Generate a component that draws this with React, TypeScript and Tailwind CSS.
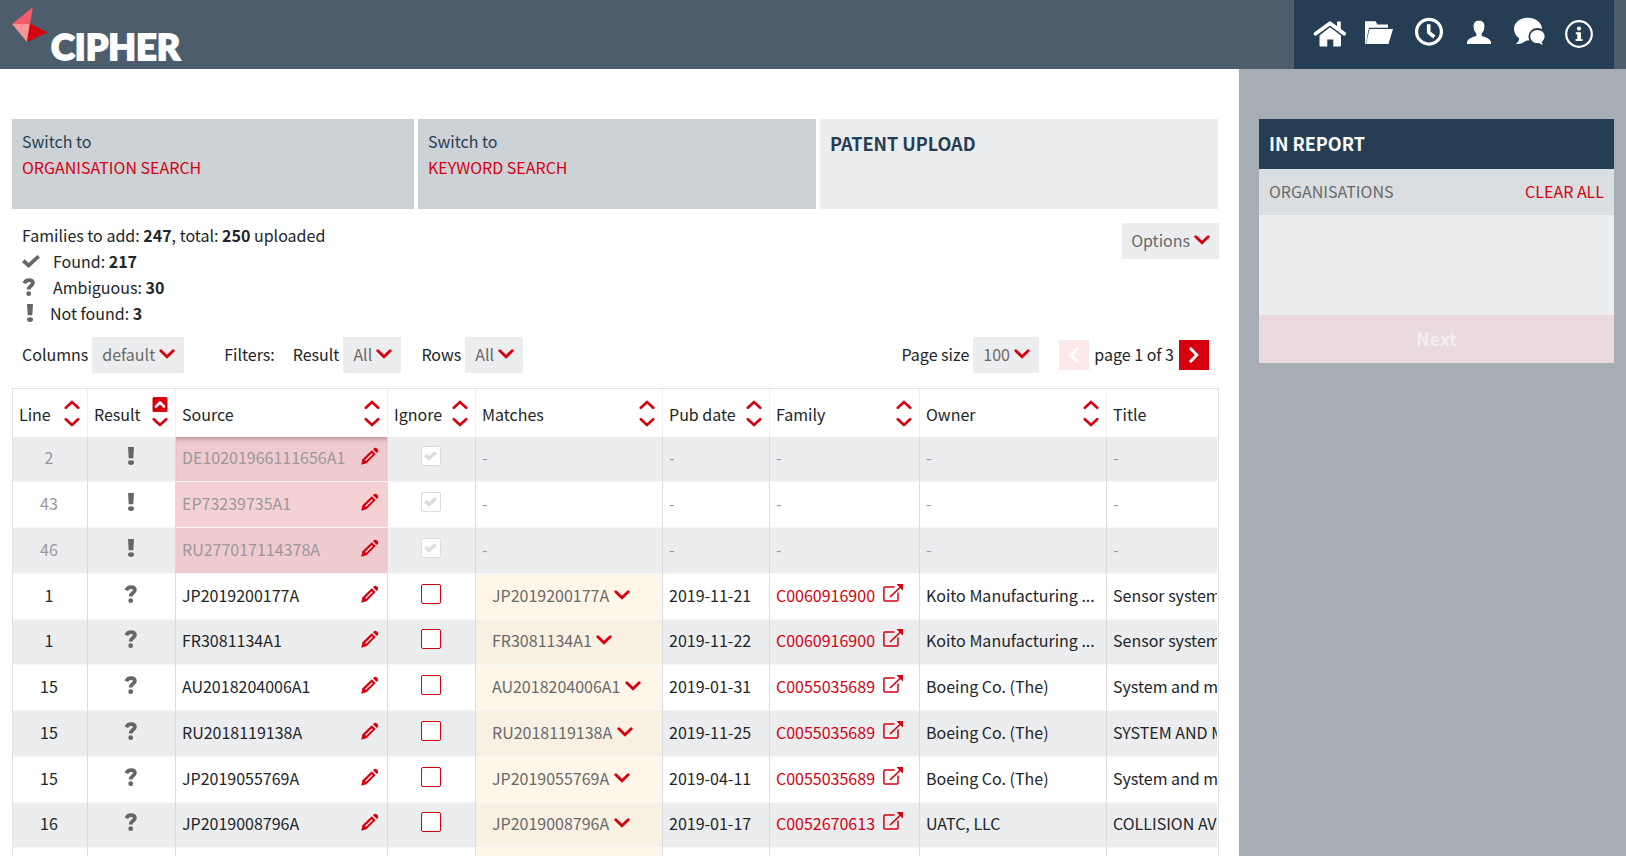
import type { ReactNode } from "react";

const NAVY_TEXT = "text-[#253e53]";

function Chevron({ className = "" }: { className?: string }) {
  return (
    <svg viewBox="0 0 16 10" className={`h-[10px] w-4 fill-none stroke-current ${className}`} aria-hidden="true">
      <path d="M1.8 1.8 8 7.8l6.200-6" strokeWidth="2.900" strokeLinecap="round" />
    </svg>
  );
}

function SortButton({ label, active = false }: { label: string; active?: boolean }) {
  return (
    <button type="button" aria-label={`Sort by ${label}`} className="shrink-0 text-[#d6000f]">
      <svg viewBox="0 0 16 30" className="h-[30px] w-4 fill-none stroke-current">
        {active && <rect x="0.500" y="0" width="15" height="15" rx="1.500" className="fill-[#d6000f] stroke-none" />}
        {active ? (
          <path d="M4 9.500 8 5.500l4 4" stroke="#fff" strokeWidth="2.600" strokeLinecap="round" />
        ) : (
          <path d="M1.800 10.800 8 5l6.200 5.800" strokeWidth="2.600" strokeLinecap="round" />
        )}
        <path d="M1.800 22.200 8 28l6.200-5.800" strokeWidth="2.600" strokeLinecap="round" />
      </svg>
    </button>
  );
}

function Drop({ id, value, label, plain = false }: { id?: string; value: string; label?: string; plain?: boolean }) {
  return (
    <span className={`relative inline-flex items-center ${plain ? "" : "h-9 bg-[#ecedef] pb-0.5"}`}>
      <select
        id={id}
        aria-label={label}
        defaultValue={value}
        className="appearance-none bg-transparent pr-[29px] pl-[10px] leading-[26px] text-[#696969]"
      >
        <option>{value}</option>
      </select>
      <Chevron className="pointer-events-none absolute right-[9px] text-[#d6000f]" />
    </span>
  );
}

const Tick = ({ className }: { className: string }) => (
  <svg viewBox="0 0 18 13" className={`overflow-visible ${className}`} aria-hidden="true">
    <path d="M0 7.200 2.700 4.300 6.600 8 15.300 0 18 2.400 6.700 13Z" fill="currentColor" />
  </svg>
);

const Question = () => (
  <svg viewBox="0 0 12 18" className="h-[18px] w-3 overflow-visible text-[#666]" aria-label="Ambiguous">
    <path d="M1.300 5.200C2.400 2.600 4 2.100 6 2.100c2.400 0 3.900 1.100 3.900 3C9.900 7.900 5.700 7.700 5.700 11.500" fill="none" stroke="currentColor" strokeWidth="3.800" />
    <circle cx="5.700" cy="15.700" r="2.400" fill="currentColor" />
  </svg>
);

const Bang = () => (
  <svg viewBox="0 0 8 18" className="h-[18px] w-2 text-[#666]" aria-label="Not found">
    <path d="M1 0h6L6.300 11.300H1.700Z" fill="currentColor" />
    <ellipse cx="4" cy="15.600" rx="3" ry="2.400" fill="currentColor" />
  </svg>
);

const Pencil = () => (
  <svg viewBox="0 0 18 18" className="size-[18px] fill-none stroke-current" aria-hidden="true">
    <path d="M0.200 17.800 1.500 12.200 10.800 3.200 14.700 7.100 5.500 16.200Z" fill="currentColor" stroke="none" />
    <path d="M12 2.200 13.300 1a3 3 0 0 1 3.800 3.600L15.800 6Z" fill="currentColor" stroke="none" />
    <path d="M4.600 13.400 11.300 6.800" stroke="#fff" strokeWidth="1.300" />
  </svg>
);

const External = () => (
  <svg viewBox="0 0 20 18" className="h-[18px] w-5 fill-none stroke-current" aria-hidden="true">
    <path d="M11.500 2.900H1.900a1 1 0 0 0-1 1V16.100a1 1 0 0 0 1 1H14a1 1 0 0 0 1-1V8.500" strokeWidth="1.500" />
    <path d="M7 13 18 2.500" strokeWidth="1.700" />
    <path d="M13.500 0H20V6.500L18 4.800 15.300 2Z" fill="currentColor" stroke="none" />
  </svg>
);

const navIcons: { label: string; icon: ReactNode }[] = [
  {
    label: "Home",
    icon: (
      <>
        <path d="M2.500 17.700 17 7.300 31.200 17.700" fill="none" stroke="currentColor" strokeWidth="3.800" strokeLinecap="round" strokeLinejoin="round" />
        <path d="M24 5.500h3.800v9L24 11.500Z" />
        <path d="M17 11.300 28 19.400V29.500q0 1-1 1H20.300V23.500H14.300V30.500H7.500q-1 0-1-1V19.400Z" />
      </>
    ),
  },
  {
    label: "Reports",
    icon: (
      <>
        <path d="M2 5.300H12.500L14.500 8.500H25V11.700H6L2.700 28H2Z" />
        <path d="M6.500 13H30L25.500 28H3Z" />
      </>
    ),
  },
  {
    label: "History",
    icon: (
      <g fill="none" stroke="currentColor" strokeWidth="3.200">
        <circle cx="16" cy="15.700" r="12.400" />
        <path d="M15.700 8.300V16.500L21.300 21" strokeWidth="3.600" />
      </g>
    ),
  },
  {
    label: "Account",
    icon: <path d="M16 4.700c3.700 0 5.400 2 5.400 5.600 0 3.200-1 5.600-2.700 7.200v2.500c4.600 1.300 8.700 2.900 9.300 6.200V28H4V26.200c.6-3.300 4.700-4.900 9.300-6.200V17.500c-1.700-1.600-2.700-4-2.700-7.200 0-3.600 1.700-5.600 5.400-5.600Z" />,
  },
  {
    label: "Chat",
    icon: (
      <>
        <path d="M15 1.700C22.700 1.700 29 6.600 29 13S22.700 24.500 15 24.500l-1.500-.1C10.500 27 6.500 28.500 2.800 28 5 26.500 6 24.600 6.200 22.300 3 20.200 1 16.800 1 13 1 6.600 7.300 1.700 15 1.700Z" />
        <path d="M24.500 13c4.600 0 8 3.300 8 7.600 0 2.300-1 4.300-2.700 5.700.2 1.300.9 2.500 2.400 3.400-2.200.3-4.600-.4-6.400-1.700-5.600.5-9.500-2.900-9.500-7.400 0-4.300 3.600-7.600 8.200-7.600Z" stroke="#253e53" strokeWidth="1.800" />
      </>
    ),
  },
  {
    label: "Information",
    icon: (
      <>
        <circle cx="16" cy="18" r="12.800" fill="none" stroke="currentColor" strokeWidth="2.200" />
        <circle cx="16" cy="12.600" r="2.100" />
        <path d="M12.800 16.300H18V23H19.500V25H12.600V23H14.300V18.200H12.800Z" />
      </>
    ),
  },
];

interface Row {
  line: string;
  source: string;
  found: boolean;
  pub?: string;
  family?: string;
  owner?: string;
  title?: string;
}

const rows: Row[] = [
  { line: "2", source: "DE10201966111656A1", found: false },
  { line: "43", source: "EP73239735A1", found: false },
  { line: "46", source: "RU277017114378A", found: false },
  { line: "1", source: "JP2019200177A", found: true, pub: "2019-11-21", family: "C0060916900", owner: "Koito Manufacturing ...", title: "Sensor system" },
  { line: "1", source: "FR3081134A1", found: true, pub: "2019-11-22", family: "C0060916900", owner: "Koito Manufacturing ...", title: "Sensor system" },
  { line: "15", source: "AU2018204006A1", found: true, pub: "2019-01-31", family: "C0055035689", owner: "Boeing Co. (The)", title: "System and method" },
  { line: "15", source: "RU2018119138A", found: true, pub: "2019-11-25", family: "C0055035689", owner: "Boeing Co. (The)", title: "SYSTEM AND METHOD" },
  { line: "15", source: "JP2019055769A", found: true, pub: "2019-04-11", family: "C0055035689", owner: "Boeing Co. (The)", title: "System and method" },
  { line: "16", source: "JP2019008796A", found: true, pub: "2019-01-17", family: "C0052670613", owner: "UATC, LLC", title: "COLLISION AVOIDANCE" },
];

const columns = [
  { name: "Line", width: "w-[75px]" },
  { name: "Result", width: "w-[88px]" },
  { name: "Source", width: "w-[212px]" },
  { name: "Ignore", width: "w-[88px]" },
  { name: "Matches", width: "w-[187px]" },
  { name: "Pub date", width: "w-[107px]" },
  { name: "Family", width: "w-[150px]" },
  { name: "Owner", width: "w-[187px]" },
  { name: "Title", width: "w-[250px]" },
];

const cell = "overflow-hidden border-r border-b border-r-[#d9dbde] border-b-[#f5f6f7] pt-0 pr-2 pb-1 pl-1.5 whitespace-nowrap";

function TableRow({ row, index }: { row: Row; index: number }) {
  const grey = index % 2 === 0;
  const sourceTint = row.found ? "" : grey ? "bg-[#efcbcf]" : "bg-[#f5d1d4]";
  const matchTint = !row.found ? "" : grey ? "bg-[#f9f0e4]" : "bg-[#fff5e8]";
  return (
    <tr className={`h-[46px] nth-[4n+1]:h-[45px] ${grey ? "bg-[#ecedef]" : "bg-white"} ${row.found ? "" : "text-[#999]"}`}>
      <td className={`${cell} text-center`}>{row.line}</td>
      <td className={cell}>
        <div className="flex justify-center pb-0.5">{row.found ? <Question /> : <Bang />}</div>
      </td>
      <td className={`${cell} ${sourceTint} ${index === 0 ? "shadow-[inset_0_5px_5px_-3px_rgba(60,0,0,0.3)]" : ""}`}>
        <div className="flex items-center justify-between">
          {row.source}
          <button type="button" aria-label={`Edit ${row.source}`} className="pb-0.5 text-[#d6000f]">
            <Pencil />
          </button>
        </div>
      </td>
      <td className={cell}>
        <div className="flex justify-center pb-0.5">
          <label className="relative grid size-5 place-items-center">
            <input
              type="checkbox"
              aria-label={`Ignore ${row.source}`}
              disabled={!row.found}
              defaultChecked={!row.found}
              className="size-5 appearance-none rounded-xs border border-[#d6000f] bg-white disabled:border-[#d9dde0]"
            />
            {!row.found && <Tick className="absolute h-2 w-[11px] stroke-current stroke-2 text-[#d9dde0]" />}
          </label>
        </div>
      </td>
      <td className={`${cell} ${matchTint}`}>
        {row.found ? <Drop value={row.source} label={`Match for ${row.source}`} plain /> : "-"}
      </td>
      <td className={cell}>{row.pub ?? "-"}</td>
      <td className={cell}>
        {row.family ? (
          <a href="#family" className="flex items-center gap-2 text-[#d6000f]">
            {row.family}
            <span className="pb-1">
              <External />
            </span>
          </a>
        ) : (
          "-"
        )}
      </td>
      <td className={cell}>{row.owner ?? "-"}</td>
      <td className={cell}>{row.title ?? "-"}</td>
    </tr>
  );
}

export default function App() {
  return (
    <div className="flex h-screen flex-col overflow-hidden bg-white font-['Noto_Sans_CJK_SC',sans-serif] text-[16px] leading-[26px] text-[#212529]">
      <header className="flex h-[69px] shrink-0 justify-between bg-[#4d5d6b] pr-3 pl-3">
        <a href="#home" aria-label="Cipher" className="pt-[6px]">
          <svg viewBox="0 0 180 60" className="h-[60px] w-[180px] overflow-visible">
            <path d="M21 1 0 18h18Z" fill="#f15c66" />
            <path d="M0 18h18l-3 18Z" fill="#f89494" />
            <path d="M18 17.500 35.500 26.500 15 36Z" fill="#d6000f" />
            <text x="39" y="54" fill="#fff" stroke="#fff" strokeWidth="1.800" fontSize="36" fontWeight="900" fontFamily="Lato, sans-serif">
              CIPHER
            </text>
          </svg>
        </a>
        <nav className="grid grid-cols-6 bg-[#253e53] px-[10px] pt-4">
          {navIcons.map(({ label, icon }) => (
            <a key={label} href="#nav" aria-label={label} className="flex w-[50px] justify-center text-white">
              <svg viewBox="0 0 32 32" className="size-8 overflow-visible fill-current">
                {icon}
              </svg>
            </a>
          ))}
        </nav>
      </header>

      <div className="flex min-h-0 flex-1">
        <main className="min-w-0 flex-1 pt-[50px] pr-5 pl-3">
          <div className="grid h-[90px] grid-cols-[402fr_398fr_398fr] gap-1 pr-px">
            <div className={`bg-[#cdd2d6] px-[10px] pt-[9px] ${NAVY_TEXT}`}>
              Switch to
              <a href="#organisation" className="block text-[#d6000f]">ORGANISATION SEARCH</a>
            </div>
            <div className={`bg-[#cdd2d6] px-[10px] pt-[9px] ${NAVY_TEXT}`}>
              Switch to
              <a href="#keyword" className="block text-[#d6000f]">KEYWORD SEARCH</a>
            </div>
            <h1 className={`bg-[#ecedef] px-[10px] pt-[9px] text-[18px] leading-[30px] font-bold ${NAVY_TEXT}`}>PATENT UPLOAD</h1>
          </div>

          <div className="flex items-start justify-between pt-[13px] pl-[10px]">
            <div>
              <p>
                Families to add: <b>247</b>, total: <b>250</b> uploaded
              </p>
              <p className="flex items-center">
                <span className="w-[31px] text-[#666]">
                  <Tick className="h-[13px] w-[18px]" />
                </span>
                <span>Found: <b>217</b></span>
              </p>
              <p className="flex items-center">
                <span className="w-[31px] pl-px"><Question /></span>
                <span>Ambiguous: <b>30</b></span>
              </p>
              <p className="flex items-center">
                <span className="w-7 pl-1"><Bang /></span>
                <span>Not found: <b>3</b></span>
              </p>
            </div>
            <button type="button" className="mt-px flex h-9 items-center gap-1 bg-[#ecedef] px-[9px] pb-0.5 text-[#696969]">
              Options
              <Chevron className="text-[#d6000f]" />
            </button>
          </div>

          <div className="flex items-center pt-[11px] pr-[10px] pl-[10px]">
            <label htmlFor="columns" className="pr-1 pb-0.5">Columns</label>
            <Drop id="columns" value="default" />
            <span className="pb-0.5 pl-10">Filters:</span>
            <label htmlFor="result" className="pr-1 pb-0.5 pl-[18px]">Result</label>
            <Drop id="result" value="All" />
            <label htmlFor="rows" className="pr-1 pb-0.5 pl-5">Rows</label>
            <Drop id="rows" value="All" />
            <label htmlFor="size" className="ml-auto pr-1 pb-0.5">Page size</label>
            <Drop id="size" value="100" />
            <button type="button" disabled aria-label="Previous page" className="ml-5 grid size-[30px] place-items-center bg-[#fbe8e9] text-white">
              <Chevron className="rotate-90" />
            </button>
            <span className="px-[5px] pb-0.5">page 1 of 3</span>
            <button type="button" aria-label="Next page" className="grid size-[30px] place-items-center bg-[#d6000f] text-white">
              <Chevron className="-rotate-90" />
            </button>
          </div>

          <div className="mt-[15px] overflow-hidden border border-b-0 border-[#e1e3e5] pr-px">
            <div className="overflow-hidden">
              <table className="w-[1344px] table-fixed border-separate border-spacing-0">
                <thead>
                  <tr className="h-12">
                    {columns.map(({ name, width }) => (
                      <th key={name} scope="col" className={`${width} border-r border-[#f0f1f2] pt-0 pr-[7px] pb-0.5 pl-1.5 text-left font-normal whitespace-nowrap`}>
                        <div className="flex items-center justify-between">
                          <span className="pt-1">{name}</span>
                          {name !== "Title" && <SortButton label={name} active={name === "Result"} />}
                        </div>
                      </th>
                    ))}
                  </tr>
                </thead>
                <tbody>
                  {rows.map((row, index) => (
                    <TableRow key={row.source} row={row} index={index} />
                  ))}
                  <tr className="h-[46px]">
                    {columns.map(({ name }) => (
                      <td key={name} className={`${cell} ${name === "Matches" ? "bg-[#fff5e8]" : ""}`} />
                    ))}
                  </tr>
                </tbody>
              </table>
            </div>
          </div>
        </main>

        <aside className="w-[387px] shrink-0 bg-[#a6adb5] pt-[50px] pr-3 pl-5">
          <section className="bg-[#ecedef]">
            <h2 className="h-[50px] bg-[#253e53] px-[10px] text-[18px] leading-[48px] font-bold text-white">IN REPORT</h2>
            <div className="flex h-[46px] items-center justify-between bg-[#dbdee1] px-[10px] pb-0.5 text-[#696969]">
              ORGANISATIONS
              <button type="button" className="text-[#d6000f]">CLEAR ALL</button>
            </div>
            <div className="h-[100px]" />
            <button type="button" disabled className="block h-12 w-full bg-[#ebdadd] pb-0.5 text-[18px] font-bold text-[#f1eff1]">
              Next
            </button>
          </section>
        </aside>
      </div>
    </div>
  );
}
